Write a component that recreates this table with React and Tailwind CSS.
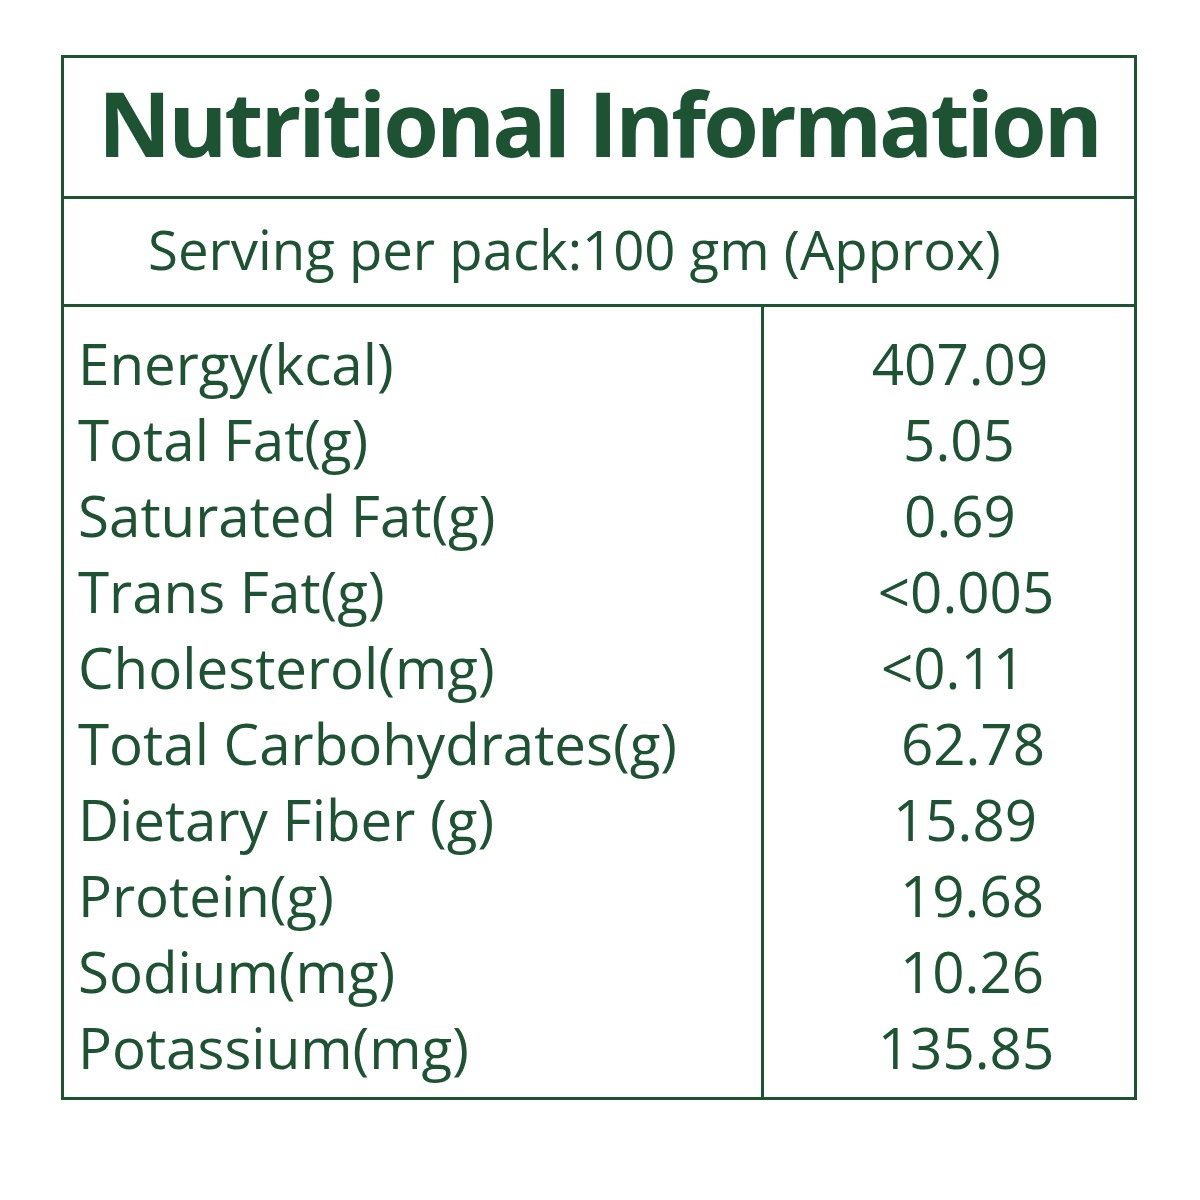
import React from 'react';

const ROWS = [
  { name: 'Energy(kcal)', value: '407.09', shift: 'ml-[22px]' },
  { name: 'Total Fat(g)', value: '5.05', shift: 'ml-[20px]' },
  { name: 'Saturated Fat(g)', value: '0.69', shift: 'ml-[22px]' },
  { name: 'Trans Fat(g)', value: '<0.005', shift: 'ml-[34px]' },
  { name: 'Cholesterol(mg)', value: '<0.11', shift: 'ml-[8px]' },
  { name: 'Total Carbohydrates(g)', value: '62.78', shift: 'ml-[48px]' },
  { name: 'Dietary Fiber (g)', value: '15.89', shift: 'ml-[32px]' },
  { name: 'Protein(g)', value: '19.68', shift: 'ml-[46px]' },
  { name: 'Sodium(mg)', value: '10.26', shift: 'ml-[46px]' },
  { name: 'Potassium(mg)', value: '135.85', shift: 'ml-[34px]' },
];

export default function App() {
  return (
    <div className="w-[1200px] h-[1200px] bg-white pt-[55px] pl-[61px] text-[#1d5233] font-['Open_Sans',sans-serif]">
      <div className="w-[1076px] border-[3px] border-[#1d5233]">
        {/* titel */}
        <div className="h-[141px] border-b-[3px] border-[#1d5233] flex items-center pl-[34px] pb-[10px]">
          <h1 className="text-[90px] font-bold leading-none tracking-[-3px] whitespace-nowrap">Nutritional Information</h1>
        </div>
        <div className="h-[108px] border-b-[3px] border-[#1d5233] flex items-center pl-[84px] pb-[4px]">
          <p className="text-[54.5px] leading-none whitespace-nowrap">Serving per pack:100 gm (Approx)</p>
        </div>
        <div className="flex">
          <div className="w-[700px] border-r-[3px] border-[#1d5233] pl-[14px] pt-[19px] pb-[11px]">
            {ROWS.map((r) => (
              <div key={r.name} className="h-[76px] flex items-center text-[56.5px] leading-none whitespace-nowrap">
                {r.name}
              </div>
            ))}
          </div>
          <div className="flex-1 pt-[19px] pb-[11px]">
            {ROWS.map((r) => (
              <div key={r.name} className="h-[76px] flex items-center justify-center text-[56.5px] leading-none">
                <span className={r.shift}>{r.value}</span>
              </div>
            ))}
          </div>
        </div>
      </div>
    </div>
  );
}
